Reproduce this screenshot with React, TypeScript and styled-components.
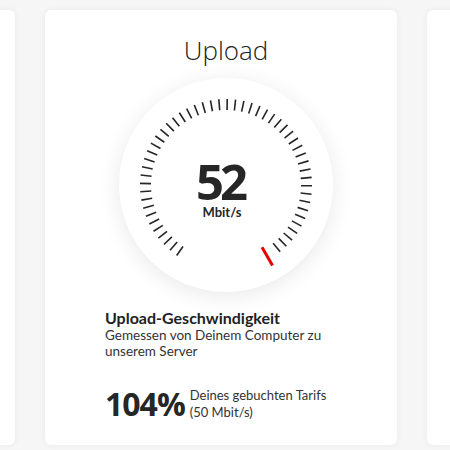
import React from "react";
import styled, { createGlobalStyle } from "styled-components";

const GlobalStyle = createGlobalStyle`
  html, body {
    margin: 0;
    padding: 0;
    background: #f6f6f6;
    font-family: Lato, "Open Sans", "Liberation Sans", sans-serif;
    color: #262626;
  }
`;

const TICK_COUNT = 52;
const START_ANGLE = -145;
const END_ANGLE = 141;

const Gauge: React.FC<{ value: number; unit: string }> = ({ value, unit }) => {
    const ticks = Array.from({ length: TICK_COUNT }, (_, i) =>
        START_ANGLE + ((END_ANGLE - START_ANGLE) * i) / (TICK_COUNT - 1)
    );

    return (
        <Dial>
            <svg width="214" height="214" viewBox="-107 -107 214 214">
                {ticks.map((a) => (
                    <line
                        key={"tick_" + a}
                        x1="0"
                        y1="-75"
                        x2="0"
                        y2="-86"
                        stroke="#262626"
                        strokeWidth="1.6"
                        transform={`rotate(${a})`}
                    />
                ))}
                <line x1="0" y1="-72" x2="0" y2="-93" stroke="#e60000" strokeWidth="3" transform="rotate(150)" />
            </svg>
            <Readout>
                <Value>{value}</Value>
                <Unit>{unit}</Unit>
            </Readout>
        </Dial>
    );
};

const App: React.FC = () => {
    return (
        <>
            <GlobalStyle />
            <Row>
                <Card />
                <Card>
                    <Title>Upload</Title>
                    <Gauge value={52} unit="Mbit/s" />
                    <Info>
                        <InfoTitle>Upload-Geschwindigkeit</InfoTitle>
                        <InfoText>Gemessen von Deinem Computer zu unserem Server</InfoText>
                    </Info>
                    <Summary>
                        <Percent>104%</Percent>
                        <SummaryText>
                            Deines gebuchten Tarifs
                            <br />
                            (50 Mbit/s)
                        </SummaryText>
                    </Summary>
                </Card>
                <Card />
            </Row>
        </>
    );
};

const Row = styled.div`
    display: flex;
    justify-content: center;
    gap: 30px;
    width: 450px;
    height: 450px;
    padding: 10px 8px 0 0;
    box-sizing: border-box;
    overflow: hidden;
`;

const Card = styled.section`
    flex: 0 0 352px;
    height: 435px;
    box-sizing: border-box;
    background: #fff;
    border-radius: 6px;
    box-shadow: 0 0 6px rgba(0, 0, 0, 0.06);
    padding: 24px 50px 0 60px;
    display: flex;
    flex-direction: column;
    align-items: center;
`;

const Title = styled.h2`
    margin: 0;
    font-family: "Open Sans", sans-serif;
    font-size: 26px;
    line-height: 32px;
    font-weight: 300;
    color: #222;
`;

const Dial = styled.div`
    margin-top: 12px;
    width: 214px;
    height: 214px;
    border-radius: 50%;
    background: #fff;
    box-shadow: 0 4px 22px rgba(0, 0, 0, 0.09);
    display: grid;
    place-items: center;

    & > * {
        grid-area: 1 / 1;
    }
`;

const Readout = styled.div`
    display: flex;
    flex-direction: column;
    align-items: center;
    margin: 8px 8px 0 0;
`;

const Value = styled.div`
    font-family: "Open Sans", sans-serif;
    font-size: 49px;
    line-height: 46px;
    font-weight: 700;
    letter-spacing: -4px;
    margin-right: 4px;
    color: #262626;
`;

const Unit = styled.div`
    font-size: 13px;
    line-height: 16px;
    font-weight: 700;
    color: #262626;
`;

const Info = styled.div`
    align-self: stretch;
    margin-top: 17px;
`;

const InfoTitle = styled.div`
    font-size: 16px;
    line-height: 18px;
    font-weight: 700;
    color: #222;
`;

const InfoText = styled.div`
    font-size: 13.5px;
    line-height: 16px;
    font-weight: 400;
    color: #333;
`;

const Summary = styled.div`
    align-self: stretch;
    margin-top: 27px;
    display: flex;
    align-items: center;
    gap: 5px;
`;

const Percent = styled.div`
    font-family: "Open Sans", sans-serif;
    font-size: 32px;
    line-height: 36px;
    font-weight: 700;
    letter-spacing: -1px;
`;

const SummaryText = styled.div`
    font-size: 13px;
    line-height: 17px;
    color: #333;
`;

export default App;
